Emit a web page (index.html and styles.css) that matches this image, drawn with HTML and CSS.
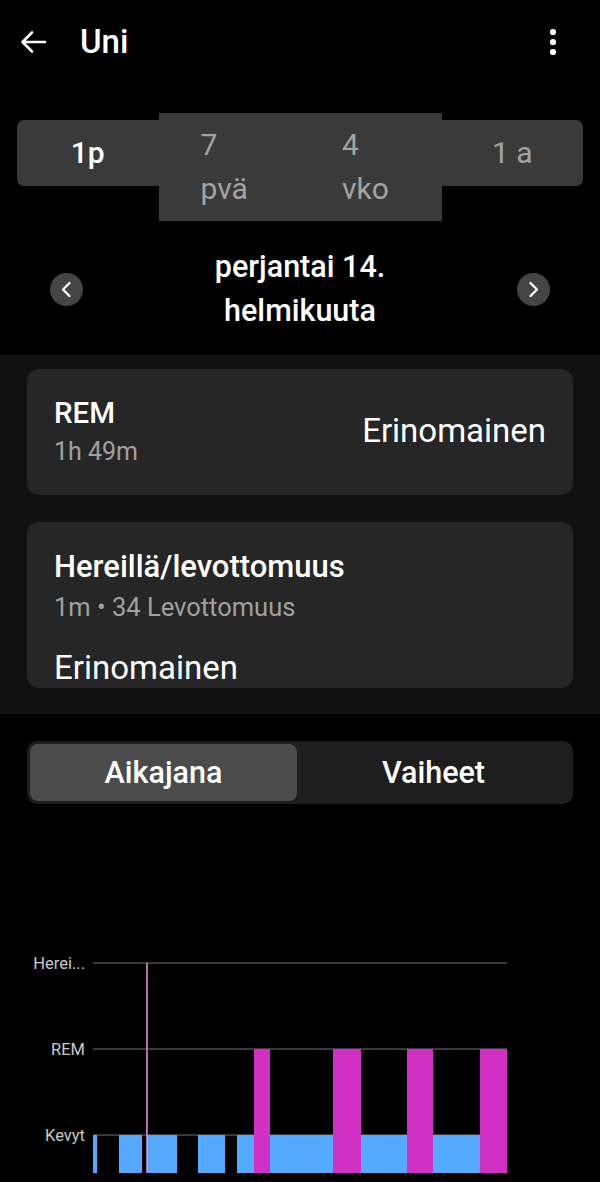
FILE: index.html
```html
<!DOCTYPE html>
<html lang="fi">
<head>
<meta charset="utf-8">
<title>Uni</title>
<link rel="stylesheet" href="styles.css">
</head>
<body>
<div class="app">
  <header class="topbar">
    <svg class="back" width="30" height="30" viewBox="0 0 30 30"><path d="M27 15H5M14 5.5L4.5 15L14 24.5" fill="none" stroke="#fff" stroke-width="2.6" stroke-linecap="round" stroke-linejoin="round"/></svg>
    <h1 class="title">Uni</h1>
    <svg class="kebab" width="24" height="30" viewBox="0 0 24 30"><circle cx="12" cy="5" r="3.1" fill="#fff"/><circle cx="12" cy="15" r="3.1" fill="#fff"/><circle cx="12" cy="25" r="3.1" fill="#fff"/></svg>
  </header>

  <div class="segments">
    <div class="seg seg-active">1p</div>
    <div class="seg seg-tall"><span class="seg-label">7 pvä</span></div>
    <div class="seg seg-tall"><span class="seg-label">4 vko</span></div>
    <div class="seg">1 a</div>
  </div>

  <div class="datenav">
    <div class="navbtn"><svg width="33" height="33" viewBox="0 0 33 33"><path d="M19.5 10L13 16.5L19.5 23" fill="none" stroke="#fff" stroke-width="2.2" stroke-linecap="round" stroke-linejoin="round"/></svg></div>
    <div class="date">perjantai 14. helmikuuta</div>
    <div class="navbtn"><svg width="33" height="33" viewBox="0 0 33 33"><path d="M13.5 10L20 16.5L13.5 23" fill="none" stroke="#fff" stroke-width="2.2" stroke-linecap="round" stroke-linejoin="round"/></svg></div>
  </div>

  <section class="band">
    <div class="card card-rem">
      <div class="card-left">
        <div class="card-title">REM</div>
        <div class="card-sub">1h 49m</div>
      </div>
      <div class="card-value">Erinomainen</div>
    </div>
    <div class="card card-awake">
      <div class="card-title">Hereillä/levottomuus</div>
      <div class="card-sub sub-awake">1m • 34 Levottomuus</div>
      <div class="card-value value-awake">Erinomainen</div>
    </div>
  </section>

  <div class="tabs">
    <div class="tab tab-active">Aikajana</div>
    <div class="tab">Vaiheet</div>
  </div>

  <div class="chart">
    <svg width="600" height="378" viewBox="0 0 600 378">
      <g class="grid" stroke="#4d4d4d" stroke-width="1.5">
        <line x1="93" y1="159" x2="507" y2="159"/>
        <line x1="93" y1="245" x2="507" y2="245"/>
        <line x1="93" y1="331" x2="507" y2="331"/>
      </g>
      <g font-family="Roboto, 'Noto Sans', sans-serif" font-size="16.5" fill="#c9c9c9" text-anchor="end">
        <text x="85" y="165">Herei...</text>
        <text x="85" y="251">REM</text>
        <text x="85" y="337">Kevyt</text>
      </g>
      <g fill="#55a9ff">
        <rect x="93" y="331" width="4" height="38"/>
        <rect x="119" y="331" width="23" height="38"/>
        <rect x="147" y="331" width="30" height="38"/>
        <rect x="198" y="331" width="27" height="38"/>
        <rect x="237" y="331" width="17" height="38"/>
        <rect x="270" y="331" width="63" height="38"/>
        <rect x="361" y="331" width="46" height="38"/>
        <rect x="433" y="331" width="47" height="38"/>
      </g>
      <g fill="#d22fc5">
        <rect x="254" y="245" width="16" height="124"/>
        <rect x="333" y="245" width="28" height="124"/>
        <rect x="407" y="245" width="26" height="124"/>
        <rect x="480" y="245" width="27" height="124"/>
      </g>
      <line x1="147" y1="159" x2="147" y2="369" stroke="#e58ada" stroke-width="1.6"/>
    </svg>
  </div>
</div>
</body>
</html>
```
FILE: styles.css
```css
* { box-sizing: border-box; }
html, body { margin: 0; padding: 0; background: #000; }
body {
  font-family: Roboto, "Noto Sans", "Liberation Sans", sans-serif;
  color: #fff;
  width: 600px;
  overflow: hidden;
}
.app { width: 600px; }

.topbar {
  height: 84px;
  display: flex;
  align-items: center;
  padding: 0 35px 0 18px;
}
.back { display: block; }
.title {
  margin: 0 0 0 32px;
  font-size: 33px;
  font-weight: 500;
  line-height: 40px;
  flex: 1;
}
.kebab { display: block; }

.segments {
  margin: 36px 17px 0;
  height: 66px;
  background: #3a3a3a;
  border-radius: 7px;
  display: grid;
  grid-template-columns: repeat(4, minmax(0, 1fr));
  align-items: start;
}
.seg {
  height: 66px;
  line-height: 66px;
  text-align: center;
  font-size: 30px;
  color: #a3a3a3;
}
.seg-active { color: #fff; font-weight: 500; }
.seg-tall {
  margin-top: -7px;
  height: 108px;
  padding-top: 10px;
  line-height: 44px;
  text-align: left;
  background: #3a3a3a;
}
.seg-label {
  display: inline-block;
  width: min-content;
  margin-left: 42px;
}

.datenav {
  margin-top: 59px;
  display: flex;
  align-items: center;
  justify-content: space-between;
  padding: 0 50px;
}
.navbtn {
  width: 33px;
  height: 33px;
  border-radius: 50%;
  background: #454545;
}
.navbtn svg { display: block; }
.date {
  width: 260px;
  text-align: center;
  font-size: 30.5px;
  font-weight: 500;
  line-height: 44px;
}

.band {
  margin-top: 22px;
  background: #111111;
  padding: 14px 27px 26px;
  display: flex;
  flex-direction: column;
  gap: 27px;
}
.card {
  background: #262626;
  border-radius: 12px;
  padding: 26px 27px 28px;
}
.card-rem {
  display: flex;
  align-items: center;
  justify-content: space-between;
}
.card-title {
  font-size: 29.5px;
  font-weight: 500;
  line-height: 36px;
}
.card-sub {
  margin-top: 6px;
  font-size: 25px;
  line-height: 30px;
  color: #a0a0a0;
}
.card-value {
  font-size: 33px;
  line-height: 40px;
}
.card-awake {
  height: 166px;
  overflow: hidden;
  padding: 27px 27px 0;
}
.card-awake .card-title { font-size: 31px; }
.sub-awake { margin-top: 7px; font-size: 25.5px; }
.value-awake { margin-top: 26px; }

.tabs {
  margin: 27px 27px 0;
  height: 63px;
  background: #1e1e1e;
  border-radius: 10px;
  padding: 3px;
  display: flex;
}
.tab {
  flex: 1;
  text-align: center;
  line-height: 57px;
  font-size: 30.5px;
  font-weight: 500;
  border-radius: 8px;
}
.tab-active {
  flex: 0 0 267px;
  background: #4b4b4b;
}

.chart svg { display: block; }
```
